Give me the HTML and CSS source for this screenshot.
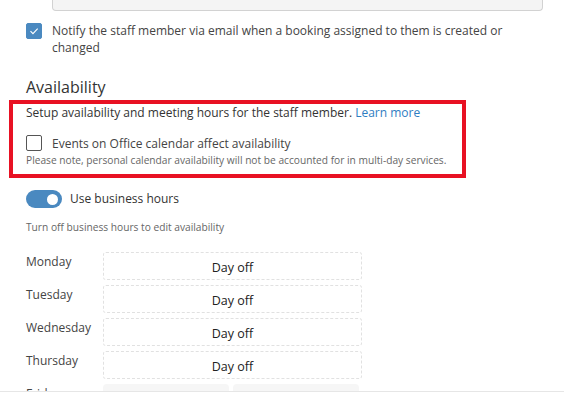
FILE: index.html
```html
<!DOCTYPE html>
<html>
<head>
<meta charset="utf-8">
<link rel="stylesheet" href="styles.css">
</head>
<body>
<div class="page">
  <div class="content">
    <div class="input-tail"></div>

    <label class="check-row notify">
      <span class="checkbox checked">
        <svg viewBox="0 0 16 16" width="16" height="16"><path d="M4 8.2 L6.8 11 L12.2 5.4" fill="none" stroke="#fff" stroke-width="1.3"/></svg>
      </span>
      <span class="check-text">Notify the staff member via email when a booking assigned to them is created or changed</span>
    </label>

    <h2 class="section-title">Availability</h2>

    <div class="highlight">
      <p class="desc">Setup availability and meeting hours for the staff member. <a class="link" href="#">Learn more</a></p>
      <label class="check-row events">
        <span class="checkbox"></span>
        <span class="check-text">Events on Office calendar affect availability</span>
      </label>
      <p class="note">Please note, personal calendar availability will not be accounted for in multi-day services.</p>
    </div>

    <div class="toggle-row">
      <span class="toggle"><span class="knob"></span></span>
      <span class="toggle-label">Use business hours</span>
    </div>
    <p class="hint">Turn off business hours to edit availability</p>

    <div class="days">
      <div class="day-row"><span class="day">Monday</span><div class="slot">Day off</div></div>
      <div class="day-row"><span class="day">Tuesday</span><div class="slot">Day off</div></div>
      <div class="day-row"><span class="day">Wednesday</span><div class="slot">Day off</div></div>
      <div class="day-row"><span class="day">Thursday</span><div class="slot">Day off</div></div>
      <div class="day-row"><span class="day">Friday</span><div class="slot-pair"><div class="time"></div><div class="time"></div></div></div>
    </div>
  </div>
  <div class="footer"></div>
</div>
</body>
</html>
```

FILE: styles.css
```css
* { box-sizing: border-box; }
html, body { margin: 0; padding: 0; background: #fff; }
body {
  font-family: "Open Sans", "Noto Sans", sans-serif;
  color: #323130;
  font-size: 12px;
  width: 564px;
  height: 400px;
  overflow: hidden;
}
.page { position: relative; height: 400px; overflow: hidden; }
.content { padding: 0 0 0 26px; }

.input-tail {
  margin-left: 26px;
  width: 491px;
  height: 11px;
  background: #f4f4f4;
  border: 1px solid #d2d2d2;
  border-top: none;
  border-radius: 0 0 4px 4px;
}

.check-row { display: flex; align-items: flex-start; gap: 10px; }
.checkbox {
  flex: 0 0 16px;
  width: 16px; height: 16px;
  border: 1px solid #444;
  border-radius: 2px;
  background: #fff;
  display: flex; align-items: center; justify-content: center;
}
.checkbox.checked { background: #4a89c0; border-color: #4a89c0; }
.checkbox svg { display: block; }

.notify { margin-top: 11px; line-height: 17px; color: #444; }
.notify .checkbox { margin-top: 1px; }
.notify .check-text { width: 460px; }

.section-title {
  margin: 20px 0 0;
  font-size: 16px;
  font-weight: 400;
  line-height: 22px;
  color: #333;
}

.highlight {
  margin: 2px 98px 0 -17px;
  border: 4px solid #e81123;
  padding: 0 0 7px 13px;
}
.desc { margin: 0; line-height: 18px; color: #333; }
.link { color: #2f7dc2; text-decoration: none; }
.events { margin-top: 13px; line-height: 17px; color: #444; }
.events .checkbox { border-color: #555; }
.note { margin: 1px 0 0; font-size: 10.2px; line-height: 14px; color: #666; }

.toggle-row { display: flex; align-items: center; gap: 8px; margin-top: 12px; }
.toggle {
  flex: 0 0 36px;
  width: 36px; height: 18px;
  border-radius: 9px;
  background: #4a89c0;
  position: relative;
}
.knob {
  position: absolute;
  right: 4px; top: 3.5px;
  width: 11px; height: 11px;
  border-radius: 50%;
  background: #fff;
}
.toggle-label { line-height: 18px; color: #333; }
.hint { margin: 12px 0 0; font-size: 10.2px; line-height: 14px; color: #666; }

.days { margin-top: 18px; display: flex; flex-direction: column; gap: 5px; }
.day-row { display: flex; align-items: flex-start; }
.day { width: 77px; line-height: 18px; padding-top: 1px; color: #444; }
.slot {
  width: 259px; height: 28px;
  border: 1px dashed #e1e1e1;
  border-radius: 3px;
  display: flex; align-items: center; justify-content: center;
  font-size: 12.5px; color: #222;
  padding-top: 2px;
}
.slot-pair { display: flex; gap: 4px; }
.time {
  width: 126px; height: 28px;
  background: #f6f6f6;
  border-radius: 4px;
}

.footer {
  position: absolute;
  left: 0; right: 0; bottom: 0;
  height: 9px;
  background: #fff;
  border-top: 1px solid #e6e6e6;
}
```
